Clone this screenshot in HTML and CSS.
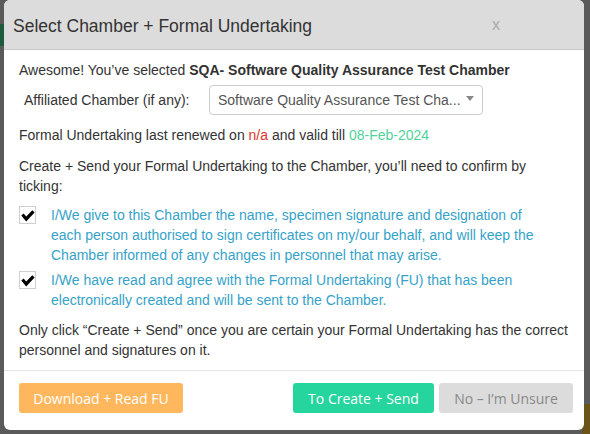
FILE: index.html
```html
<!DOCTYPE html>
<html>
<head>
<meta charset="utf-8">
<link rel="stylesheet" href="styles.css">
</head>
<body>
<div class="backdrop">
  <span class="bg-green"></span>
  <span class="bg-brown"></span>
</div>
<div class="modal">
  <div class="modal-header">
    <h1 class="modal-title">Select Chamber + Formal Undertaking</h1>
    <span class="close">x</span>
  </div>
  <div class="modal-body">
    <p class="line">Awesome! You’ve selected <b>SQA- Software Quality Assurance Test Chamber</b></p>
    <div class="select-row">
      <span class="select-label">Affiliated Chamber (if any):</span>
      <div class="select">
        <span class="select-text">Software Quality Assurance Test Cha...</span>
        <span class="caret"></span>
      </div>
    </div>
    <p class="line renewed">Formal Undertaking last renewed on <span class="red">n/a</span> and valid till <span class="green">08-Feb-2024</span></p>
    <p class="line create">Create + Send your Formal Undertaking to the Chamber, you’ll need to confirm by ticking:</p>
    <div class="check-row first">
      <span class="checkbox"><svg width="14" height="12" viewBox="0 0 14 12"><path d="M0.3 5.6 L2.6 3.5 L5.2 6.4 L11.3 0.3 L13.6 2.4 L5.2 11.4 Z" fill="#000"/></svg></span>
      <span class="check-text">I/We give to this Chamber the name, specimen signature and designation of each person authorised to sign certificates on my/our behalf, and will keep the Chamber informed of any changes in personnel that may arise.</span>
    </div>
    <div class="check-row second">
      <span class="checkbox"><svg width="14" height="12" viewBox="0 0 14 12"><path d="M0.3 5.6 L2.6 3.5 L5.2 6.4 L11.3 0.3 L13.6 2.4 L5.2 11.4 Z" fill="#000"/></svg></span>
      <span class="check-text">I/We have read and agree with the Formal Undertaking (FU) that has been electronically created and will be sent to the Chamber.</span>
    </div>
    <p class="line only">Only click “Create + Send” once you are certain your Formal Undertaking has the correct personnel and signatures on it.</p>
  </div>
  <div class="modal-footer">
    <button class="btn btn-orange">Download + Read FU</button>
    <span class="spacer"></span>
    <button class="btn btn-green">To Create + Send</button>
    <button class="btn btn-gray">No – I’m Unsure</button>
  </div>
</div>
</body>
</html>
```

FILE: styles.css
```css
* { box-sizing: border-box; }
html, body { margin: 0; padding: 0; }
body {
  width: 590px;
  height: 434px;
  background: #5a5a5a;
  font-family: "Liberation Sans", Arial, sans-serif;
  overflow: hidden;
  position: relative;
}
.backdrop { position: absolute; inset: 0; }
.bg-green {
  position: absolute; left: 0; top: 24px; width: 6px; height: 22px;
  background: #1f5a3c;
}
.bg-brown {
  position: absolute; right: 0; top: 404px; width: 8px; height: 30px;
  background: #6b5418;
}
.modal {
  position: relative;
  margin-left: 4px;
  width: 580px;
  height: 430px;
  background: #fff;
  border-radius: 6px;
  overflow: hidden;
  display: flex;
  flex-direction: column;
}
.modal-header {
  height: 50px;
  background: #dcdcdc;
  border-bottom: 1px solid #c8c8c8;
  display: flex;
  align-items: center;
  padding: 3px 0 0 9px;
}
.modal-title {
  margin: 0;
  font-size: 17.5px;
  font-weight: normal;
  color: #333;
  flex: 1;
}
.close {
  font-size: 16px;
  color: #aaa;
  margin-right: 84px;
  margin-top: -2px;
}
.modal-body {
  padding: 10px 11px 10px 15px;
  font-size: 14px;
  line-height: 20px;
  color: #333;
}
.line { margin: 0; }
.line b { font-weight: bold; color: #333; }
.select-row {
  display: flex;
  align-items: center;
  margin-top: 5px;
  height: 30px;
}
.select-label {
  width: 190px;
  padding-left: 5px;
}
.select {
  width: 274px;
  height: 30px;
  border: 1px solid #ccc;
  border-radius: 4px;
  display: flex;
  align-items: center;
  padding: 0 8px 0 8px;
  color: #555;
}
.select-text { flex: 1; white-space: nowrap; }
.caret {
  width: 0; height: 0;
  border-left: 4px solid transparent;
  border-right: 4px solid transparent;
  border-top: 5px solid #888;
  margin-top: -3px;
}
.renewed { margin-top: 10px; }
.red { color: #e03228; }
.green { color: #4fd39b; }
.create { margin-top: 11px; padding-right: 20px; }
.check-row {
  display: flex;
  align-items: flex-start;
}
.check-row.first { margin-top: 9px; }
.check-row.second { margin-top: 5px; }
.checkbox {
  width: 17px;
  height: 18px;
  border: 1px solid #cfcfcf;
  display: flex;
  align-items: center;
  justify-content: center;
  margin-top: 1px;
  margin-right: 15px;
  flex: none;
}
.checkbox svg { margin-top: 1px; }
.check-text {
  color: #35a2c9;
  padding-right: 34px;
}
.only { margin-top: 10px; }
.modal-footer {
  border-top: 1px solid #e5e5e5;
  display: flex;
  align-items: center;
  padding: 12px 11px 17px 15px;
}
.spacer { flex: 1; }
.btn {
  height: 30px;
  border: none;
  border-radius: 3px;
  font-family: "Open Sans", sans-serif;
  font-size: 14px;
  color: #fff;
  padding: 0;
}
.btn-orange { background: #ffb75e; width: 164px; }
.btn-green { background: #26d59e; width: 141px; }
.btn-gray { background: #dcdcdc; color: #888; width: 134px; margin-left: 5px; }
```
